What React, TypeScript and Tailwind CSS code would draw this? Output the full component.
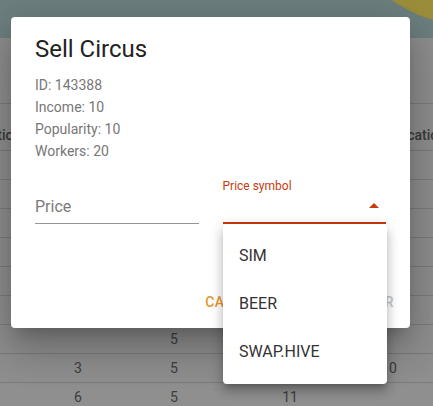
const rows: string[][] = [
  ['2', '5', '8', ''],
  ['4', '5', '9', '12'],
  ['1', '5', '10', ''],
  ['3', '5', '8', '7'],
  ['5', '5', '12', ''],
  ['2', '5', '9', ''],
  ['', '5', '', ''],
  ['3', '5', '', '10'],
  ['6', '5', '11', ''],
];

const symbols = ['SIM', 'BEER', 'SWAP.HIVE'];

const Cell = ({ w, children }: { w: string; children: React.ReactNode }) => (
  <div className={`${w} text-center`}>{children}</div>
);

export default function App() {
  return (
    <div className="relative h-[406px] w-[433px] overflow-hidden bg-[#8f8f8f] font-['Roboto','Liberation_Sans',sans-serif]">
      {/* page behind the backdrop */}
      <div className="relative h-[38px] bg-[#6e7f80]">
        <div className="absolute left-[342px] top-[-222px] h-[246px] w-[246px] rounded-full bg-[#9c8f3a]" />
      </div>
      <div className="mt-[65px] border-t border-[#7b7b7b]">
        <div className="flex h-[47px] justify-between border-b border-[#7b7b7b] pt-[21px] text-[14px] leading-[20px] font-medium text-[#3a3a3a]">
          <span className="-ml-[33px] shrink-0">Location</span>
          <span className="-mr-[13px] shrink-0">Location</span>
        </div>
        {rows.map((r, i) => (
          <div key={i} className="flex h-[29px] items-center border-b border-[#7b7b7b] pl-[30px] text-[14px] text-[#3d3d3d]">
            <Cell w="w-[96px]">{r[0]}</Cell>
            <Cell w="w-[96px]">{r[1]}</Cell>
            <Cell w="w-[136px]">{r[2]}</Cell>
            <Cell w="w-[62px]">{r[3]}</Cell>
          </div>
        ))}
      </div>

      {/* dialog */}
      <div className="absolute left-[11px] top-[17px] flex h-[311px] w-[399px] flex-col rounded-[4px] bg-white shadow-[0_11px_15px_-7px_rgba(0,0,0,0.2),0_24px_38px_3px_rgba(0,0,0,0.14),0_9px_46px_8px_rgba(0,0,0,0.12)]">
        <h2 className="px-6 pt-4 text-[24px] leading-[32px] text-[#222]">Sell Circus</h2>
        <div className="mt-[9px] px-6 text-[14px] leading-[22px] text-[#777]">
          <div>ID: 143388</div>
          <div>Income: 10</div>
          <div>Popularity: 10</div>
          <div>Workers: 20</div>
        </div>
        <div className="flex h-[62px] gap-6 px-6">
          <div className="flex w-[164px] flex-col justify-end border-b border-[#949494]">
            <span className="pb-[4px] text-[16px] leading-[24px] text-[#7a7a7a]">Price</span>
          </div>
          <div className="flex w-[164px] flex-col pt-[16px]">
            <span className="text-[12px] leading-[16px] text-[#c9390f]">Price symbol</span>
            <div className="flex h-[30px] items-start justify-end border-b-2 border-[#c9390f] pr-[7px] pt-[9px]">
              <svg width="10" height="5" viewBox="0 0 10 5">
                <path d="M0 5 L5 0 L10 5 Z" fill="#c9390f" />
              </svg>
            </div>
          </div>
        </div>
        <div className="mt-auto flex justify-end gap-2 p-2">
          <button className="w-[72px] rounded px-2 py-[6px] text-[14px] leading-[24.5px] font-medium tracking-[0.4px] text-[#e8962c] uppercase">
            Cancel
          </button>
          <button className="w-[125px] rounded px-2 py-[6px] text-right text-[14px] leading-[24.5px] font-medium tracking-[0.4px] text-[#c4c4c4] uppercase">
            Place order
          </button>
        </div>
      </div>

      {/* open select menu */}
      <ul className="absolute left-[223px] top-[224px] w-[164px] rounded-[4px] bg-white py-2 shadow-[0_5px_5px_-3px_rgba(0,0,0,0.2),0_8px_10px_1px_rgba(0,0,0,0.14),0_3px_14px_2px_rgba(0,0,0,0.12)]">
        {symbols.map((s) => (
          <li key={s} className="flex h-[48px] items-center px-4 text-[16px] leading-[24px] text-[#333]">
            {s}
          </li>
        ))}
      </ul>
    </div>
  );
}
